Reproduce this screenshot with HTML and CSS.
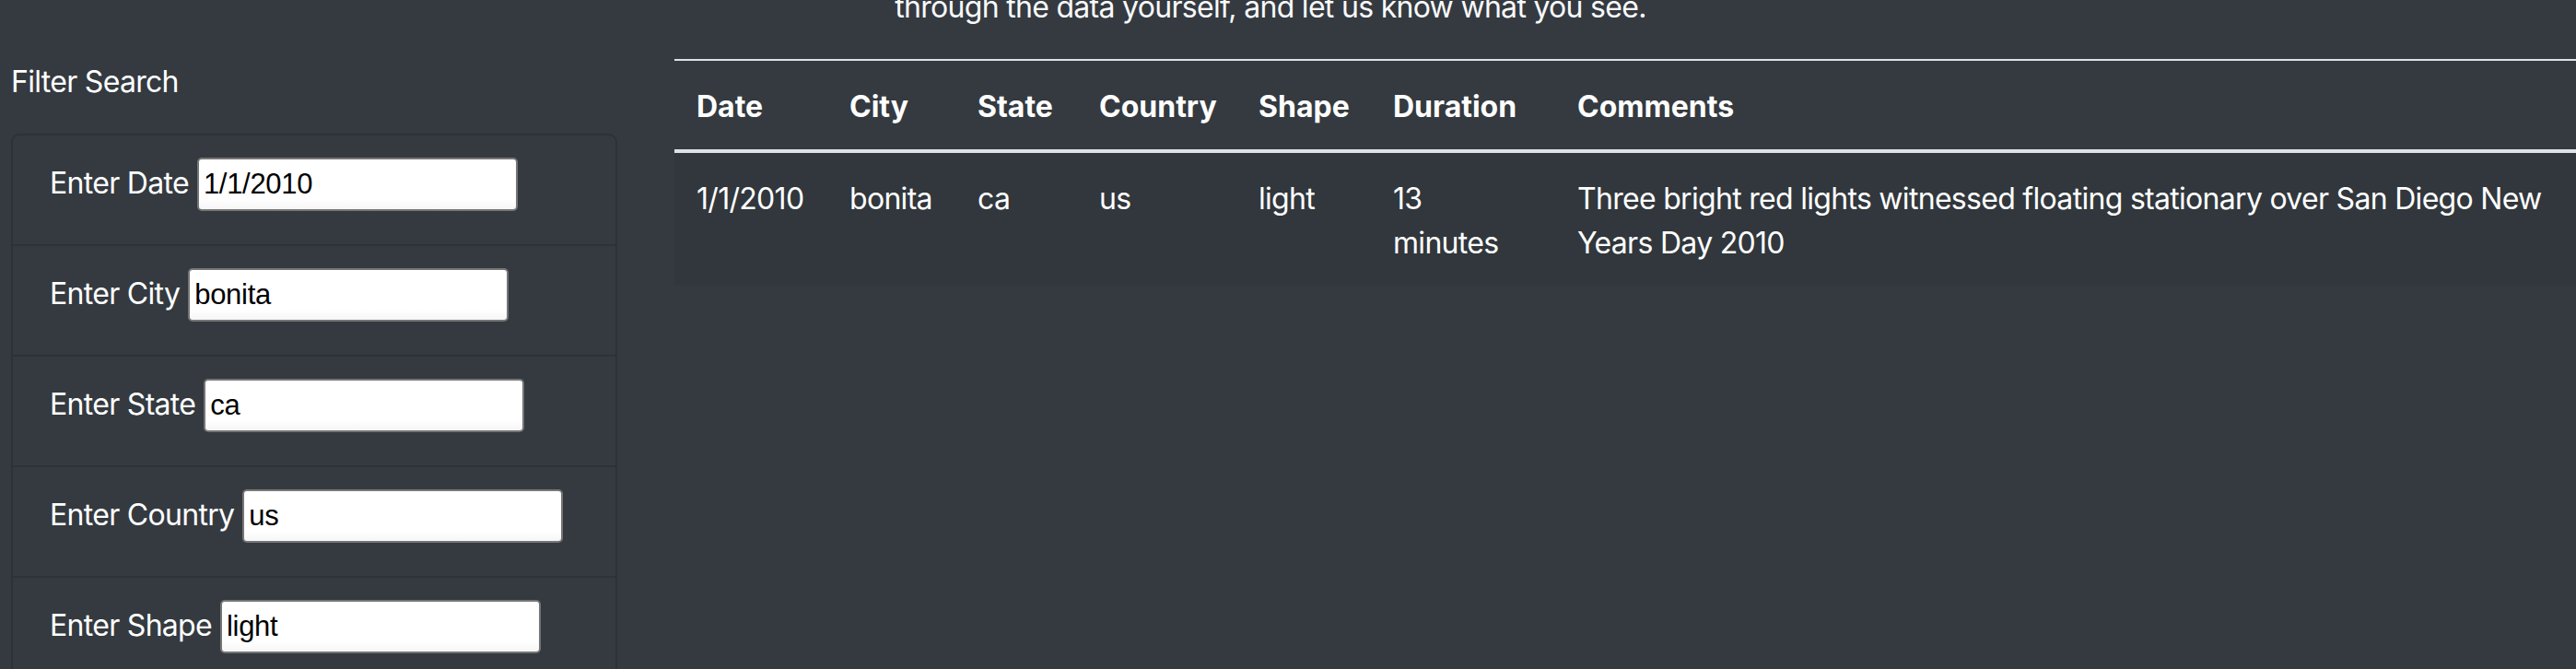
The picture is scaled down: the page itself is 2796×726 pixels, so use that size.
FILE: index.html
```html
<!DOCTYPE html>
<html lang="en">
<head>
<meta charset="utf-8">
<title>UFO Sightings</title>
<link rel="stylesheet" href="styles.css">
</head>
<body>
  <header class="intro">
    <p class="intro-text">through the data yourself, and let us know what you see.</p>
  </header>
  <main class="layout">
    <aside class="filters">
      <h2 class="filters-title">Filter Search</h2>
      <ul class="filter-list">
        <li class="filter-item"><label class="filter-label" for="datetime">Enter Date</label><input class="filter-input" id="datetime" type="text" value="1/1/2010"></li>
        <li class="filter-item"><label class="filter-label" for="city">Enter City</label><input class="filter-input" id="city" type="text" value="bonita"></li>
        <li class="filter-item"><label class="filter-label" for="state">Enter State</label><input class="filter-input" id="state" type="text" value="ca"></li>
        <li class="filter-item"><label class="filter-label" for="country">Enter Country</label><input class="filter-input" id="country" type="text" value="us"></li>
        <li class="filter-item"><label class="filter-label" for="shape">Enter Shape</label><input class="filter-input" id="shape" type="text" value="light"></li>
      </ul>
    </aside>
    <section class="results">
      <table class="ufo-table">
        <colgroup>
          <col class="col-date">
          <col class="col-city">
          <col class="col-state">
          <col class="col-country">
          <col class="col-shape">
          <col class="col-duration">
          <col class="col-comments">
        </colgroup>
        <thead>
          <tr>
            <th>Date</th>
            <th>City</th>
            <th>State</th>
            <th>Country</th>
            <th>Shape</th>
            <th>Duration</th>
            <th>Comments</th>
          </tr>
        </thead>
        <tbody>
          <tr class="stripe">
            <td>1/1/2010</td>
            <td>bonita</td>
            <td>ca</td>
            <td>us</td>
            <td>light</td>
            <td>13 minutes</td>
            <td>Three bright red lights witnessed floating stationary over San Diego New Years Day 2010</td>
          </tr>
        </tbody>
      </table>
    </section>
  </main>
</body>
</html>
```

FILE: styles.css
```css
html, body {
  margin: 0;
  padding: 0;
  overflow: hidden;
  background: #343a40;
}

body {
  color: #ffffff;
  font-family: Inter, "Noto Sans", "DejaVu Sans", sans-serif;
  font-size: 32px;
  line-height: 48px;
  letter-spacing: -0.7px;
  width: 2796px;
  height: 726px;
}

.intro {
  padding-right: 38px;
  text-align: center;
}

.intro-text {
  margin: -16px 0 32px 0;
  color: #f8f9fa;
}

.layout {
  display: grid;
  grid-template-columns: 658px 1fr;
  column-gap: 62px;
  padding-left: 12px;
  align-items: start;
}

.filters-title {
  margin: 1px 0 32px 0;
  font-size: 32px;
  font-weight: 400;
  line-height: 48px;
}

.filter-list {
  list-style: none;
  margin: 0;
  padding: 0;
  border: 2px solid rgba(0, 0, 0, 0.13);
  border-radius: 9px;
}

.filter-item {
  box-sizing: border-box;
  height: 120px;
  padding: 24px 0 0 40px;
  border-bottom: 2px solid rgba(0, 0, 0, 0.13);
  display: flex;
  align-items: baseline;
  gap: 9px;
}

.filter-label {
  white-space: nowrap;
}

.filter-input {
  box-sizing: border-box;
  width: 348px;
  height: 58px;
  margin: 0;
  padding: 0 5px;
  border: 2px solid #767676;
  border-radius: 5px;
  background: linear-gradient(#ffffff 80%, #f6f6f6);
  color: #000000;
  font-family: "Liberation Sans", Arial, sans-serif;
  font-size: 31px;
  letter-spacing: -0.3px;
}

.results {
  min-width: 0;
}

.ufo-table {
  width: 100%;
  table-layout: fixed;
  border-collapse: collapse;
  color: #ffffff;
}

.col-date { width: 166px; }
.col-city { width: 139px; }
.col-state { width: 132px; }
.col-country { width: 173px; }
.col-shape { width: 146px; }
.col-duration { width: 200px; }

.ufo-table th,
.ufo-table td {
  padding: 26px 24px 22px 24px;
  text-align: left;
  vertical-align: top;
}

.ufo-table th {
  font-weight: 700;
  letter-spacing: 0;
  border-top: 2px solid #dee2e6;
  border-bottom: 4px solid #dee2e6;
}

.ufo-table td {
  font-weight: 400;
}

.stripe {
  background: rgba(0, 0, 0, 0.05);
}
```
